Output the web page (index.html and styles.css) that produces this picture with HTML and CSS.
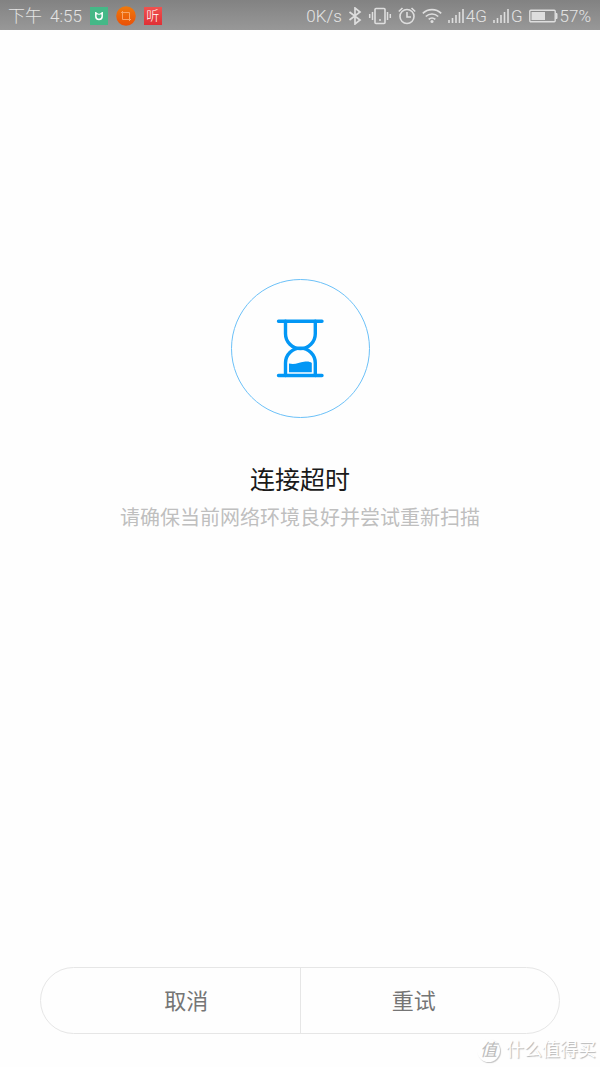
FILE: index.html
```html
<!DOCTYPE html>
<html lang="zh-CN">
<head>
<meta charset="UTF-8" />
<meta name="viewport" content="width=device-width, initial-scale=1" />
<title>连接超时</title>
<link rel="stylesheet" href="styles.css">
</head>
<body>

<header class="status-bar">
  <div class="status-left">
    <span>下午</span>
    <span>4:55</span>
    <div class="notifications">
      <svg width="18" height="18" viewBox="0 0 18 18">
        <rect width="18" height="18" fill="#45b887" />
        <path d="M5.800 5v4.200a3.200 3.200 0 0 0 6.400 0V5M5.800 5.500L7.500 7M12.200 5.500L10.500 7" fill="none" stroke="#fff" stroke-width="1.500" />
        <path d="M7.500 7.200h3" stroke="#fff" stroke-width="1" />
      </svg>
      <svg width="20" height="20" viewBox="0 0 20 20">
        <defs>
          <linearGradient id="orange" x1="0" y1="0" x2="0" y2="1">
            <stop offset="0" stop-color="#f07a0c" />
            <stop offset="1" stop-color="#e95008" />
          </linearGradient>
        </defs>
        <circle cx="10" cy="10" r="9.8" fill="url(#orange)" />
        <path d="M5 6.500h8.500v8.500M6.500 5v8.500H15" fill="none" stroke="#f9a468" stroke-width="1" />
      </svg>
      <span class="app-ting">听</span>
    </div>
  </div>

  <div class="status-right">
    <span>0K/s</span>
    <svg width="14" height="18" viewBox="0 0 14 18">
      <path d="M1.500 5l10.500 8L7 17V1l5 4L1.500 13" fill="none" stroke="#dedede" stroke-width="1.700" />
    </svg>
    <svg width="24" height="18" viewBox="0 0 24 18">
      <rect x="7" y="1.500" width="10" height="15" rx="1" fill="none" stroke="#dedede" stroke-width="1.600" />
      <path d="M4.500 5v8M19.500 5v8M1.700 7v4M22.300 7v4" stroke="#dedede" stroke-width="1.500" />
      <circle cx="12" cy="13" r="1" fill="#dedede" />
    </svg>
    <svg width="18" height="18" viewBox="0 0 18 18">
      <g fill="none" stroke="#dedede" stroke-width="1.600">
        <circle cx="9" cy="9.500" r="7" />
        <path d="M9 5v5h4M.8 4.500L4.500 1M17.200 4.500L13.500 1" />
      </g>
    </svg>
    <svg width="20" height="16" viewBox="0 0 20 16">
      <g fill="none" stroke="#dedede" stroke-width="1.700">
        <path d="M.8 5.300a13.200 13.200 0 0 1 18.400 0" />
        <path d="M3.800 8.500a9 9 0 0 1 12.400 0" />
        <path d="M6.700 11.300a4.800 4.800 0 0 1 6.600 0" />
      </g>
      <circle cx="10" cy="13.500" r="1.500" fill="#dedede" />
    </svg>
    <div class="signal">
      <svg width="16" height="14" viewBox="0 0 16 14">
        <path d="M1 14v-3M4.500 14V9M8 14V6M11.500 14V3M15 14V0" stroke="#dedede" stroke-width="1.600" />
      </svg>
      <span>4G</span>
    </div>
    <div class="signal">
      <svg width="16" height="14" viewBox="0 0 16 14">
        <path d="M1 14v-3M4.500 14V9M8 14V6M11.500 14V3M15 14V0" stroke="#dedede" stroke-width="1.600" />
      </svg>
      <span>G</span>
    </div>
    <div class="signal">
      <svg width="29" height="14" viewBox="0 0 29 14">
        <rect x=".8" y="1.300" width="25.400" height="11.400" rx="1" fill="none" stroke="#dedede" stroke-width="1.400" />
        <rect x="2.500" y="3" width="13.500" height="8" fill="#dedede" />
        <path d="M26.500 4.500H28v5h-1.500" fill="#dedede" stroke="#dedede" />
      </svg>
      <span>57%</span>
    </div>
  </div>
</header>

<main class="timeout">
  <div class="timeout-icon">
    <svg width="48" height="60" viewBox="0 0 48 60">
      <g fill="none" stroke="#0397f5" stroke-width="3.400" stroke-linecap="round">
        <path d="M2.500 2.200h43.500M2.500 56.500h43.500" />
        <path d="M9.500 2.200v12.500a14.900 14.900 0 0 0 29.800 0V2.200" />
        <path d="M9.500 56.500V44a14.900 14.900 0 0 1 29.800 0v12.500" />
      </g>
      <path d="M13 44.500c6 1.500 10-1 15-1.800 4-.5 6.200 0 7.800 1.300V53.200H13z" fill="#0397f5" />
    </svg>
  </div>
  <h1>连接超时</h1>
  <p>请确保当前网络环境良好并尝试重新扫描</p>
</main>

<footer class="actions">
  <button type="button" class="cancel">取消</button>
  <button type="button" class="retry">重试</button>
</footer>

<div class="watermark">
  <span class="watermark-logo">值</span>
  <span>什么值得买</span>
</div>

</body>
</html>
```

FILE: styles.css
```css
* {
  box-sizing: border-box;
}
body {
  position: relative;
  display: flex;
  flex-direction: column;
  min-height: 100vh;
  margin: 0;
  background: #fefefe;
  font-family: Roboto, "Noto Sans CJK SC", sans-serif;
}
svg {
  display: block;
  flex: none;
}

/* Status bar */
.status-bar {
  display: flex;
  justify-content: space-between;
  align-items: center;
  height: 30px;
  padding: 1px 9px 0 8px;
  background: linear-gradient(#828282, #989898);
  color: #e4e4e4;
  font-size: 17px;
  font-weight: 300;
  line-height: 20px;
  white-space: nowrap;
}
.status-left {
  display: flex;
  align-items: center;
  gap: 8px;
}
.notifications {
  display: flex;
  align-items: center;
  gap: 8px;
}
.app-ting {
  width: 18px;
  height: 18px;
  background: linear-gradient(#f0524f, #df2f35);
  color: #fff;
  font-size: 13px;
  line-height: 18px;
  text-align: center;
}
.status-right {
  display: flex;
  align-items: center;
  gap: 6px;
}
.signal {
  display: flex;
  align-items: center;
  gap: 2px;
}

/* Message */
.timeout {
  flex: 1;
  display: flex;
  flex-direction: column;
  align-items: center;
  padding: 249px 20px 40px;
  text-align: center;
}
.timeout-icon {
  display: flex;
  justify-content: center;
  align-items: center;
  width: 139px;
  height: 139px;
  border: 1px solid #6cc1f8;
  border-radius: 50%;
}
.timeout h1 {
  margin: 45px 0 0;
  color: #1a1a1a;
  font-size: 25px;
  font-weight: 400;
  line-height: 36px;
}
.timeout p {
  margin: 5px 0 0;
  color: #bfbfbf;
  font-size: 20px;
  line-height: 28px;
}

/* Buttons */
.actions {
  display: flex;
  margin: 0 40px 33px;
  border: 1px solid #e6e6e6;
  border-radius: 34px;
  overflow: hidden;
}
.actions button {
  flex: 1;
  padding: 17px 0 15px;
  border: none;
  background: transparent;
  color: #757575;
  font-family: inherit;
  font-size: 22px;
  line-height: 33px;
  cursor: pointer;
}
.actions .cancel {
  padding-left: 32px;
}
.actions .retry {
  padding-right: 32px;
  border-left: 1px solid #e6e6e6;
}

/* Watermark over the bottom corner */
.watermark {
  position: absolute;
  right: 4px;
  bottom: 4px;
  display: flex;
  align-items: center;
  gap: 6px;
  color: #fff;
  font-size: 18px;
  line-height: 26px;
  text-shadow: 1px 1px 1px #b4b4b4;
  pointer-events: none;
}
.watermark-logo {
  width: 23px;
  height: 23px;
  border-radius: 50%;
  box-shadow: 1px 1px 1px #c4c4c4;
  color: #bbb;
  font-size: 17px;
  font-style: italic;
  line-height: 22px;
  text-align: center;
  text-shadow: none;
}
```
